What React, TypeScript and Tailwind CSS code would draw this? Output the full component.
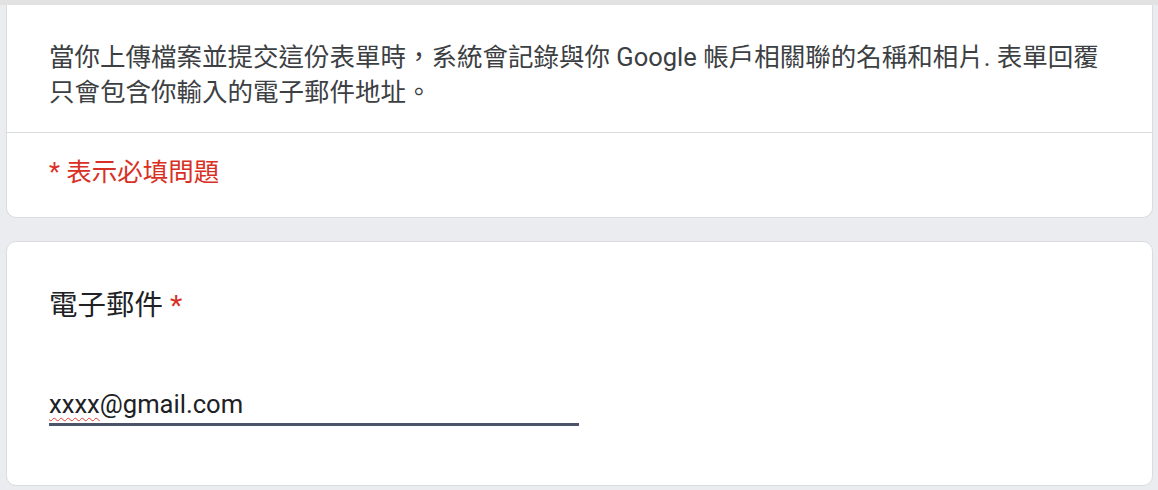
export default function App() {
  const cjk = { fontFamily: 'Roboto, "Noto Sans CJK TC", sans-serif' };

  return (
    <div className="w-[1158px] h-[490px] overflow-hidden bg-[#ebecef] pl-[6px] pr-[5px]" style={cjk}>
      <div className="h-[5px] bg-[#e2e2e2] -ml-[6px] -mr-[5px]" />

      {/* Header card (bottom part) */}
      <div className="bg-white border border-t-0 border-[#dadce0] rounded-b-[10px] border-t border-t-[#e0e0e0]">
        <div className="px-[42px] pt-[35px] pb-[22px] text-[25.5px] leading-[35px] text-[#3c4043]">
          <span className="block whitespace-nowrap">
            當你上傳檔案並提交這份表單時，系統會記錄與你 Google 帳戶相關聯的名稱和相片. 表單回覆
          </span>
          <span className="block whitespace-nowrap">只會包含你輸入的電子郵件地址。</span>
        </div>
        <div className="border-t border-[#dadce0] px-[42px] pt-[22px] pb-[27px] text-[25.5px] leading-[35px] text-[#d93025]">
          * 表示必填問題
        </div>
      </div>

      {/* Email question card */}
      <div className="mt-[23px] bg-white border border-[#dadce0] rounded-[10px] px-[42px] pt-[46px] pb-[59px]">
        <div className="text-[28.5px] leading-[36px] text-[#202124]">
          電子郵件 <span className="text-[#d93025]">*</span>
        </div>
        <div className="mt-[64px] w-[530px] border-b-[3px] border-[#4b5468] text-[25.6px] leading-[32px] text-[#202124] pb-[3px]">
          <span className="underline decoration-wavy decoration-[#e53935] decoration-1 underline-offset-4">xxxx</span>
          @gmail.com
        </div>
      </div>
    </div>
  );
}
